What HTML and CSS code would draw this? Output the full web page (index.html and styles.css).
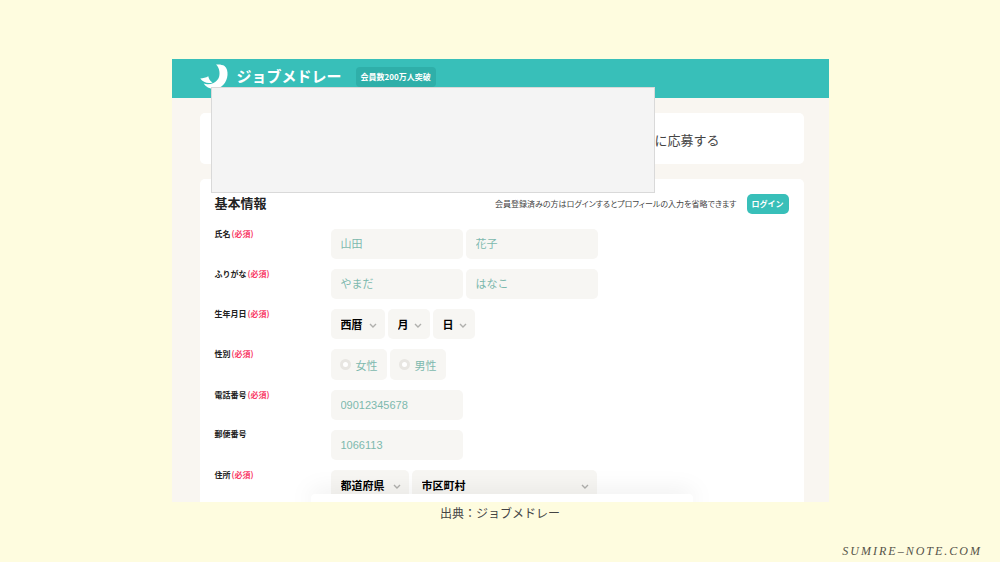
FILE: index.html
```html
<!DOCTYPE html>
<html lang="ja">
<head>
<meta charset="utf-8">
<meta name="viewport" content="width=device-width, initial-scale=1">
<title>ジョブメドレー 応募フォーム</title>
<link rel="stylesheet" href="styles.css">
</head>
<body>
<main class="slide">
  <figure class="figure">
    <div class="screen">
      <header class="topbar">
        <svg class="logo-mark" viewBox="0 0 29 26" aria-hidden="true">
          <path d="M16 .6C19 .2 22.500.600 24.500 2 27 4 27.800 7.500 27.500 11 27 18.500 21.500 25 14 25 9.500 25 5.800 22.800 3.600 19.600 7 20.600 10.500 20.300 13.500 19 18.500 16.500 20 12.500 19.400 7.500 19 4.500 17.800 2.200 16 .6Z"/>
          <path d="M.3 14.500C3 14.300 6 13.500 8.300 12.200 8.700 14.800 10 17 12.500 18.400 8 19.800 3 18.500.300 14.500Z"/>
        </svg>
        <span class="logo-text">ジョブメドレー</span>
        <span class="badge">会員数200万人突破</span>
      </header>
      <div class="content">
        <section class="card title-card"><h1 class="title">に応募する</h1></section>
        <form class="card form-card">
          <div class="section-head">
            <h2 class="section-title">基本情報</h2>
            <p class="note">会員登録済みの方はログインするとプロフィールの入力を省略できます</p>
            <button class="login" type="button">ログイン</button>
          </div>
          <div class="row">
            <label class="label" for="sei">氏名<span class="required">(必須)</span></label>
            <div class="fields">
              <input class="text" id="sei" type="text" placeholder="山田">
              <input class="text" type="text" placeholder="花子" aria-label="名">
            </div>
          </div>
          <div class="row">
            <label class="label" for="kana">ふりがな<span class="required">(必須)</span></label>
            <div class="fields">
              <input class="text" id="kana" type="text" placeholder="やまだ">
              <input class="text" type="text" placeholder="はなこ" aria-label="めい">
            </div>
          </div>
          <div class="row">
            <label class="label" for="year">生年月日<span class="required">(必須)</span></label>
            <div class="fields">
              <span class="select year"><select id="year"><option>西暦</option></select><svg class="chevron" viewBox="0 0 8 5" aria-hidden="true"><path d="M1 1l3 3 3-3"/></svg></span>
              <span class="select day"><select aria-label="月"><option>月</option></select><svg class="chevron" viewBox="0 0 8 5" aria-hidden="true"><path d="M1 1l3 3 3-3"/></svg></span>
              <span class="select day"><select aria-label="日"><option>日</option></select><svg class="chevron" viewBox="0 0 8 5" aria-hidden="true"><path d="M1 1l3 3 3-3"/></svg></span>
            </div>
          </div>
          <div class="row" role="radiogroup" aria-labelledby="sex">
            <span class="label" id="sex">性別<span class="required">(必須)</span></span>
            <div class="fields">
              <label class="choice"><input class="radio" type="radio" name="sex">女性</label>
              <label class="choice"><input class="radio" type="radio" name="sex">男性</label>
            </div>
          </div>
          <div class="row">
            <label class="label" for="tel">電話番号<span class="required">(必須)</span></label>
            <div class="fields"><input class="text" id="tel" type="tel" placeholder="09012345678"></div>
          </div>
          <div class="row">
            <label class="label" for="zip">郵便番号</label>
            <div class="fields"><input class="text" id="zip" type="text" placeholder="1066113"></div>
          </div>
          <div class="row">
            <label class="label" for="pref">住所<span class="required">(必須)</span></label>
            <div class="fields">
              <span class="select pref"><select id="pref"><option>都道府県</option></select><svg class="chevron" viewBox="0 0 8 5" aria-hidden="true"><path d="M1 1l3 3 3-3"/></svg></span>
              <span class="select city"><select aria-label="市区町村"><option>市区町村</option></select><svg class="chevron" viewBox="0 0 8 5" aria-hidden="true"><path d="M1 1l3 3 3-3"/></svg></span>
            </div>
          </div>
        </form>
      </div>
      <div class="cover"></div>
      <div class="sheet"></div>
    </div>
    <figcaption class="caption">出典：ジョブメドレー</figcaption>
  </figure>
  <footer class="signature">SUMIRE–NOTE.COM</footer>
</main>
</body>
</html>
```
FILE: styles.css
```css
* { box-sizing: border-box; }

body {
  margin: 0;
  background: #fefcdf;
  color: #222;
  font-family: "Liberation Sans", "Noto Sans CJK JP", sans-serif;
}

.slide {
  display: flex;
  flex-direction: column;
  min-height: 100vh;
  padding-top: 59px;
}

.figure {
  width: 100%;
  max-width: 657px;
  margin: 0 auto;
}

.screen {
  position: relative;
  aspect-ratio: 657 / 443;
  overflow: hidden;
  background: #f9f6f1;
}

.topbar {
  display: flex;
  align-items: center;
  height: 39px;
  padding: 0 28px 4px;
  background: #38bfb9;
  color: #fff;
}

.logo-mark {
  width: 29px;
  height: 26px;
  fill: #fff;
}

.logo-text {
  margin: 0 14px 0 8px;
  font-size: 15px;
  font-weight: 700;
  line-height: 20px;
}

.badge {
  padding: 0 5px;
  border-radius: 4px;
  background: #2fafa9;
  font-family: "Noto Sans CJK JP", sans-serif;
  font-size: 8px;
  font-weight: 700;
  line-height: 20px;
}

.content {
  display: grid;
  gap: 15px;
  padding: 15px 25px 0 28px;
}

.card {
  border-radius: 5px;
  background: #fff;
}

.title-card {
  padding: 18px 84px 13px 15px;
}

.title {
  margin: 0;
  color: #444;
  font-size: 13px;
  font-weight: 400;
  line-height: 20px;
  text-align: right;
}

.form-card {
  display: grid;
  gap: 10px;
  padding: 15px;
}

.section-head {
  display: flex;
  align-items: center;
  gap: 10px;
  margin-bottom: 5px;
}

.section-title {
  margin: 0 auto 0 0;
  font-size: 13px;
  line-height: 20px;
}

.note {
  margin: 0;
  color: #444;
  font-family: "Noto Sans CJK JP", sans-serif;
  font-feature-settings: "palt";
  font-size: 8px;
  line-height: 20px;
}

.login {
  padding: 0 5px;
  border: 0;
  border-radius: 5px;
  background: #38bfb9;
  color: #fff;
  font: 700 8px/20px "Noto Sans CJK JP", sans-serif;
}

.row {
  display: grid;
  grid-template-columns: 116px 1fr;
}

.label {
  font-size: 8px;
  font-weight: 700;
  line-height: 10px;
}

.required {
  margin-left: 1px;
  color: #f83a66;
  font-family: "Noto Sans CJK JP", sans-serif;
}

.fields {
  display: flex;
  gap: 3px;
}

.text,
.select,
.choice {
  height: 30px;
  border: 0;
  border-radius: 5px;
  background: #f7f6f3;
}

.text {
  width: 132px;
  padding: 0 10px;
  font: 11px "Liberation Sans", "Noto Sans CJK JP", sans-serif;
}

.text::placeholder {
  color: #7db9ae;
}

.select {
  display: grid;
  align-items: center;
}

.select select,
.chevron {
  grid-area: 1 / 1;
}

.select select {
  appearance: none;
  width: 100%;
  height: 30px;
  padding: 0 10px;
  border: 0;
  background: transparent;
  color: #000;
  font: 700 11px "Noto Sans CJK JP", sans-serif;
}

.chevron {
  justify-self: end;
  width: 8px;
  height: 5px;
  margin: 2px 8px 0 0;
  fill: none;
  stroke: #b0b0ad;
  stroke-width: 1.4;
  pointer-events: none;
}

.year { width: 54px; }
.day { width: 42px; }
.pref { width: 78px; }
.city { width: 185px; }

.choice {
  display: flex;
  align-items: center;
  gap: 5px;
  height: 31px;
  padding: 0 9px;
  color: #7db9ae;
  font-size: 11px;
}

.radio {
  appearance: none;
  width: 11px;
  height: 11px;
  margin: 0;
  border: 3px solid #e8e6e2;
  border-radius: 50%;
  background: #fff;
}

.cover {
  position: absolute;
  top: 28px;
  left: 39px;
  width: 444px;
  height: 106px;
  border: 1px solid #d9d9d9;
  background: #f4f4f4;
}

.sheet {
  position: absolute;
  bottom: 0;
  left: 139px;
  width: 382px;
  height: 8px;
  border-radius: 4px 4px 0 0;
  background: #fff;
  box-shadow: 0 0 25px rgba(0, 0, 0, 0.15);
}

.caption {
  color: #444;
  font-size: 12px;
  line-height: 24px;
  text-align: center;
}

.signature {
  margin-top: auto;
  padding: 0 18px 2px 0;
  color: #555348;
  font: italic 12px/18px "Liberation Serif", serif;
  letter-spacing: 2px;
  text-align: right;
}
```
